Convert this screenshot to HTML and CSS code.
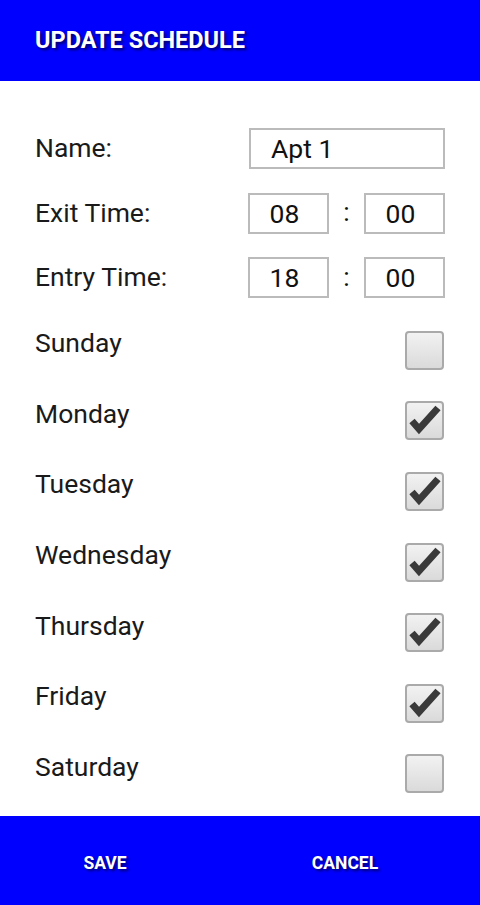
FILE: index.html
```
<!DOCTYPE html>
<html lang="en">
<head>
    <meta charset="UTF-8">
    <meta name="viewport" content="width=device-width, initial-scale=1.0">
    <title>Update Schedule</title>
    <link rel="stylesheet" href="styles.css">
</head>
<body>
    <div class="screen">
        <!-- Title bar -->
        <div class="title-bar">UPDATE SCHEDULE</div>

        <div class="form">
            <div class="field-row">
                <span class="label">Name:</span>
                <div class="box box-wide">Apt 1</div>
            </div>
            <div class="field-row">
                <span class="label">Exit Time:</span>
                <div class="time">
                    <div class="box box-small">08</div>
                    <span class="colon">:</span>
                    <div class="box box-small">00</div>
                </div>
            </div>
            <div class="field-row">
                <span class="label">Entry Time:</span>
                <div class="time">
                    <div class="box box-small">18</div>
                    <span class="colon">:</span>
                    <div class="box box-small">00</div>
                </div>
            </div>

            <!-- Days of the week -->
            <div class="days">
                <div class="day-row"><span class="day">Sunday</span><span class="check"></span></div>
                <div class="day-row"><span class="day">Monday</span><span class="check"><svg viewBox="0 0 35 35"><polyline points="5,18 12,26 31,5"/></svg></span></div>
                <div class="day-row"><span class="day">Tuesday</span><span class="check"><svg viewBox="0 0 35 35"><polyline points="5,18 12,26 31,5"/></svg></span></div>
                <div class="day-row"><span class="day">Wednesday</span><span class="check"><svg viewBox="0 0 35 35"><polyline points="5,18 12,26 31,5"/></svg></span></div>
                <div class="day-row"><span class="day">Thursday</span><span class="check"><svg viewBox="0 0 35 35"><polyline points="5,18 12,26 31,5"/></svg></span></div>
                <div class="day-row"><span class="day">Friday</span><span class="check"><svg viewBox="0 0 35 35"><polyline points="5,18 12,26 31,5"/></svg></span></div>
                <div class="day-row"><span class="day">Saturday</span><span class="check"></span></div>
            </div>
        </div>

        <!-- Bottom buttons -->
        <div class="button-bar">
            <div class="bar-button">SAVE</div>
            <div class="bar-button">CANCEL</div>
        </div>
    </div>
</body>
</html>
```

FILE: styles.css
```
body {
    margin: 0;
    font-family: Roboto, "Liberation Sans", sans-serif;
    background: #fff;
}

.screen {
    width: 480px;
    height: 905px;
    display: flex;
    flex-direction: column;
    overflow: hidden;
}

.title-bar {
    height: 81px;
    box-sizing: border-box;
    padding: 26px 0 0 35px;
    background: #0000ff;
    color: #fff;
    font-size: 23.5px;
    font-weight: bold;
    text-shadow: 2px 2px 3px rgba(0, 0, 0, 0.6);
}

.form {
    flex: 1;
    padding: 47px 35px 0 35px;
}

.field-row {
    display: flex;
    justify-content: space-between;
    align-items: center;
    height: 41px;
    margin-bottom: 23.5px;
}

.label {
    font-size: 26.5px;
    color: #1a1a1a;
    margin-top: -2px;
}

.box {
    box-sizing: border-box;
    height: 41px;
    border: 2px solid #bbbbbb;
    font-size: 26.5px;
    color: #111;
    display: flex;
    align-items: center;
}

.box-wide {
    width: 196px;
    padding-left: 20px;
}

.box-small {
    width: 81px;
    justify-content: center;
    padding-right: 8px;
}

.time {
    display: flex;
    align-items: center;
}

.colon {
    width: 35px;
    text-align: center;
    font-size: 26.5px;
    color: #111;
    margin-top: -3px;
}

.days {
    margin-top: -10px;
}

.day-row {
    height: 70.6px;
    display: flex;
    justify-content: space-between;
    align-items: center;
}

.day {
    font-size: 26.5px;
    color: #1a1a1a;
    margin-bottom: 8px;
}

.check {
    box-sizing: border-box;
    width: 39px;
    height: 39px;
    margin-top: 7px;
    margin-right: 1px;
    border: 2px solid #aaaaaa;
    border-radius: 4px;
    background: linear-gradient(#f2f2f2, #dadada);
}

.check svg {
    display: block;
    width: 35px;
    height: 35px;
}

.check polyline {
    fill: none;
    stroke: #3a3a3a;
    stroke-width: 7;
    stroke-linejoin: miter;
}

.button-bar {
    height: 89px;
    background: #0000ff;
    display: flex;
}

.bar-button {
    flex: 1;
    padding-right: 30px;
    display: flex;
    align-items: center;
    justify-content: center;
    color: #fff;
    font-size: 17.5px;
    font-weight: bold;
    text-shadow: 2px 2px 3px rgba(0, 0, 0, 0.6);
    padding-top: 5px;
}
```
